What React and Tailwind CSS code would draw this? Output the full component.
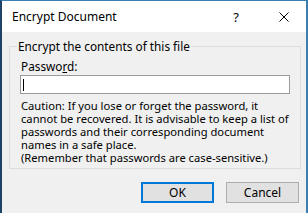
export default function App() {
  const font = { fontFamily: '"Noto Sans", "Open Sans", sans-serif' };
  return (
    <div
      className="w-[308px] h-[213px] overflow-hidden bg-[#f0f0f0] border-t border-t-[#3a7fb4] border-r-2 border-r-[#3a7fb4] border-l-2 border-l-[#1d4466] flex flex-col text-black"
      style={font}
    >
      <div className="h-[31px] bg-white flex items-center shrink-0">
        <span className="ml-[10px] text-[12px] leading-[16px] flex-1">Encrypt Document</span>
        <span className="text-[13px] leading-[16px] mr-[40px]">?</span>
        <svg width="10" height="10" viewBox="0 0 10 10" className="mr-[17px]">
          <path d="M0.5 0.5 L9.5 9.5 M9.5 0.5 L0.5 9.5" stroke="#000" strokeWidth="1" />
        </svg>
      </div>
      <div className="flex flex-col pl-[7px] pr-[7px]">
        <fieldset className="mt-[6px] w-[292px] border border-[#dcdcdc] p-0 m-0">
          <legend className="ml-[7px] px-[1px] text-[11.8px] leading-[16px]">Encrypt the contents of this file</legend>
          <div className="flex flex-col px-[10px] pt-[5px] pb-[4px]">
            <div className="text-[11.8px] leading-[15px] pl-[1px]">
              Passwo<span className="underline">r</span>d:
            </div>
            <div className="mt-[1px] h-[19px] w-full bg-white border border-[#9a9a9a] flex items-center">
              <div className="ml-[2px] w-px h-[12px] bg-black" />
            </div>
            <div className="mt-[5px] text-[11.2px] leading-[13px] pl-[1px] whitespace-nowrap flex flex-col">
              <span>Caution: If you lose or forget the password, it</span>
              <span>cannot be recovered. It is advisable to keep a list of</span>
              <span>passwords and their corresponding document</span>
              <span>names in a safe place.</span>
              <span>(Remember that passwords are case-sensitive.)</span>
            </div>
          </div>
        </fieldset>
        <div className="flex justify-end gap-[12px] mt-[13px]">
          <button className="w-[73px] h-[21px] bg-[#e1e1e1] border-2 border-[#0078d7] text-[12px] leading-[15px] flex items-center justify-center">
            OK
          </button>
          <button className="w-[73px] h-[21px] bg-[#e1e1e1] border border-[#adadad] text-[12px] leading-[15px] flex items-center justify-center">
            Cancel
          </button>
        </div>
      </div>
    </div>
  );
}
